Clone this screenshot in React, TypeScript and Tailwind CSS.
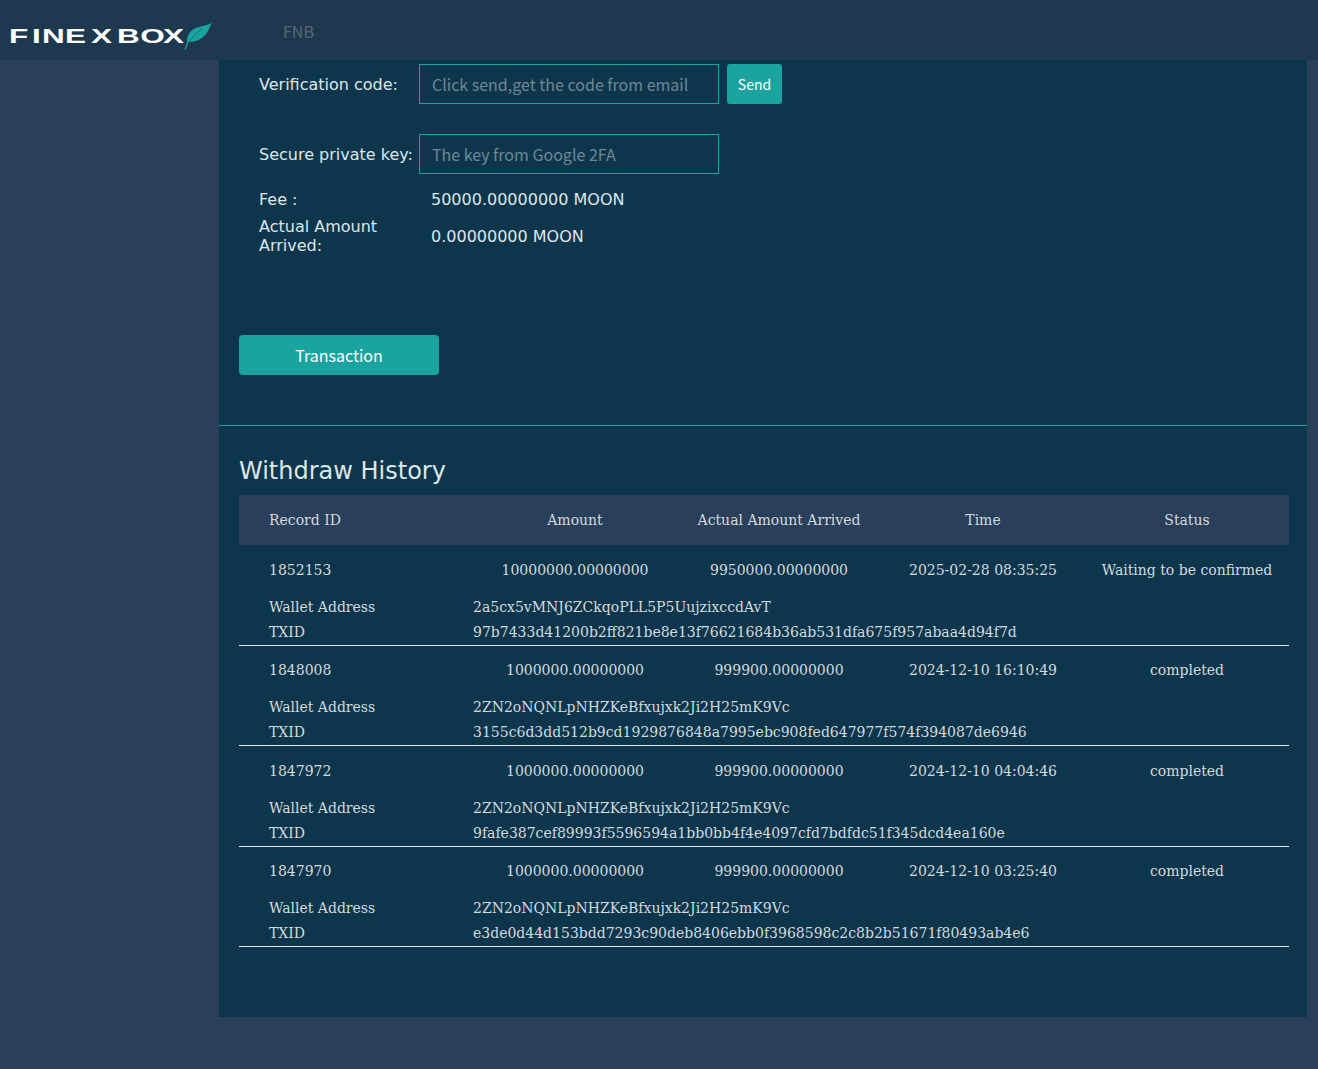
const rows = [
  { id: "1852153", amount: "10000000.00000000", actual: "9950000.00000000", time: "2025-02-28 08:35:25", status: "Waiting to be confirmed", wallet: "2a5cx5vMNJ6ZCkqoPLL5P5UujzixccdAvT", txid: "97b7433d41200b2ff821be8e13f76621684b36ab531dfa675f957abaa4d94f7d" },
  { id: "1848008", amount: "1000000.00000000", actual: "999900.00000000", time: "2024-12-10 16:10:49", status: "completed", wallet: "2ZN2oNQNLpNHZKeBfxujxk2Ji2H25mK9Vc", txid: "3155c6d3dd512b9cd1929876848a7995ebc908fed647977f574f394087de6946" },
  { id: "1847972", amount: "1000000.00000000", actual: "999900.00000000", time: "2024-12-10 04:04:46", status: "completed", wallet: "2ZN2oNQNLpNHZKeBfxujxk2Ji2H25mK9Vc", txid: "9fafe387cef89993f5596594a1bb0bb4f4e4097cfd7bdfdc51f345dcd4ea160e" },
  { id: "1847970", amount: "1000000.00000000", actual: "999900.00000000", time: "2024-12-10 03:25:40", status: "completed", wallet: "2ZN2oNQNLpNHZKeBfxujxk2Ji2H25mK9Vc", txid: "e3de0d44d153bdd7293c90deb8406ebb0f3968598c2c8b2b51671f80493ab4e6" },
];

function Logo() {
  return (
    <svg width="206" height="34" viewBox="0 0 206 34" className="ml-[8px] mt-[8px] shrink-0">
      <text transform="scale(1.5 1)" x="0.6 15.93 22.6 37.93 55.33 72.6 88.13 103.33" y="26.3" fill="#ffffff" fontFamily="'Liberation Sans', sans-serif" fontWeight="700" fontSize="21">FINEXBOX</text>
      <path d="M203.7 6C196 10 186 9 181.5 16C179 20 178.5 24 179 26C177.5 29 177 31 176.6 33L177.6 33C178.5 30 179.5 28 181 25C188 25 194 22 198 17C201 13 202 10 203.7 6Z" fill="#1aa39f" />
      <path d="M180 26C184 20 188 16 194 12" stroke="#1e3850" strokeWidth="0.5" fill="none" />
    </svg>
  );
}

export default function App() {
  return (
    <div className="min-h-[1069px] bg-[#2a3f5a] font-['DejaVu_Sans',sans-serif]">
      <header className="flex h-[60px] items-center bg-[#1e3850]">
        <Logo />
        <span className="ml-[69px] mt-[2px] text-[16px] text-[#59666f] font-['Noto_Sans_CJK_SC',sans-serif]">FNB</span>
      </header>
      <div className="flex">
        <div className="w-[219px] shrink-0" />
        <main className="h-[957px] w-[1088px] bg-[#0d364d] pt-[4px]">
          <div className="pl-[40px] text-[16px] text-[#dde6ea]">
            <div className="flex h-[40px] items-center">
              <label className="w-[160px] mt-[2px]">Verification code:</label>
              <div className="flex h-[40px] w-[300px] items-center border border-[#1aa39f] px-[12px] text-[#6f8894] font-['Noto_Sans_CJK_SC',sans-serif]">Click send,get the code from email</div>
              <button className="ml-[8px] h-[40px] w-[55px] rounded-[3px] bg-[#1aa39f] text-[14px] text-white font-['Noto_Sans_CJK_SC',sans-serif]">Send</button>
            </div>
            <div className="mt-[30px] flex h-[40px] items-center">
              <label className="w-[160px] mt-[2px] whitespace-nowrap">Secure private key:</label>
              <div className="flex h-[40px] w-[300px] items-center border border-[#1aa39f] px-[12px] text-[#6f8894] font-['Noto_Sans_CJK_SC',sans-serif]">The key from Google 2FA</div>
            </div>
            <div className="mt-[16px] flex h-[20px] items-center">
              <span className="w-[172px]">Fee :</span>
              <span>50000.00000000 MOON</span>
            </div>
            <div className="mt-[7px] flex items-center">
              <span className="w-[172px] leading-[19px]">Actual Amount<br />Arrived:</span>
              <span className="mt-[2px]">0.00000000 MOON</span>
            </div>
          </div>
          <button className="ml-[20px] mt-[80px] block h-[40px] w-[200px] rounded-[4px] bg-[#1aa39f] text-[16px] text-white font-['Noto_Sans_CJK_SC',sans-serif]">Transaction</button>
          <div className="mt-[50px] h-px bg-[#2b98a0]" />
          <h2 className="ml-[20px] mt-[29px] text-[24px] leading-[33px] text-[#dde6ea]">Withdraw History</h2>
          <div className="ml-[20px] mt-[7px] w-[1050px] text-[14px] text-[#d3dade] font-['DejaVu_Serif',serif]">
            <div className="grid h-[50.4px] grid-cols-[234px_repeat(4,204px)] items-center bg-[#2a3f5a] text-center">
              <div className="pl-[30px] text-left">Record ID</div>
              <div>Amount</div>
              <div>Actual Amount Arrived</div>
              <div>Time</div>
              <div>Status</div>
            </div>
            {rows.map((r) => (
              <div key={r.id} className="h-[100.4px] border-b border-[#dfe7ea]">
                <div className="grid h-[49.6px] grid-cols-[234px_repeat(4,204px)] items-center pt-[0.3px] text-center">
                  <div className="pl-[30px] text-left">{r.id}</div>
                  <div>{r.amount}</div>
                  <div>{r.actual}</div>
                  <div>{r.time}</div>
                  <div>{r.status}</div>
                </div>
                <div className="grid h-[25px] grid-cols-[234px_1fr] items-center">
                  <div className="pl-[30px]">Wallet Address</div>
                  <div>{r.wallet}</div>
                </div>
                <div className="grid h-[25px] grid-cols-[234px_1fr] items-center">
                  <div className="pl-[30px]">TXID</div>
                  <div>{r.txid}</div>
                </div>
              </div>
            ))}
          </div>
        </main>
      </div>
    </div>
  );
}
